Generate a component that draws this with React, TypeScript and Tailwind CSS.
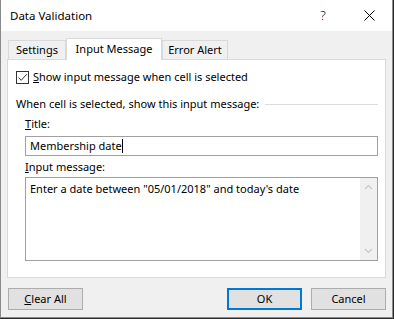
import React from 'react';

const font = { fontFamily: '"Noto Sans", "Liberation Sans", sans-serif' };

function Tab({ label, active, width }: { label: string; active?: boolean; width: string }) {
  return active ? (
    <div className={`relative z-10 -mb-px h-[22px] ${width} bg-white border border-b-0 border-[#d9d9d9] flex items-center justify-center text-[11px] text-black`}>
      {label}
    </div>
  ) : (
    <div className={`h-[19px] ${width} bg-[#f0f0f0] border border-b-0 border-[#d9d9d9] flex items-center justify-center text-[11px] text-black`}>
      {label}
    </div>
  );
}

function Button({ children, primary, className = '' }: { children: React.ReactNode; primary?: boolean; className?: string }) {
  return (
    <div
      className={`h-[22px] w-[75px] flex items-center justify-center text-[11px] text-black bg-[#e1e1e1] ${
        primary ? 'border-2 border-[#0078d7]' : 'border border-[#adadad]'
      } ${className}`}
    >
      {children}
    </div>
  );
}

export default function App() {
  return (
    <div className="w-[394px] h-[319px] bg-[#2b2b2b] overflow-hidden" style={font}>
      <div className="w-[393px] h-[318px] flex flex-col bg-[#f0f0f0] border-l border-r border-b border-[#8a8a8a]">
        {/* Title bar */}
        <div className="h-[31px] bg-white flex items-center shrink-0">
          <span className="pl-[9px] text-[11.5px] text-black flex-1">Data Validation</span>
          <span className="w-[46px] text-center text-[13px] font-light text-black">?</span>
          <span className="w-[46px] flex justify-center">
            <svg width="11" height="11" viewBox="0 0 11 11">
              <path d="M0.5 0.5 L10.5 10.5 M10.5 0.5 L0.5 10.5" stroke="#000" strokeWidth="1" />
            </svg>
          </span>
        </div>

        {/* Body */}
        <div className="flex-1 flex flex-col px-[6px] pt-[7px]">
          <div className="flex items-end pl-px">
            <Tab label="Settings" width="w-[58px]" />
            <Tab label="Input Message" width="w-[96px]" active />
            <Tab label="Error Alert" width="w-[66px]" />
          </div>

          <div className="h-[219px] w-[379px] bg-white border border-[#d9d9d9] flex flex-col pl-[8px] pr-[7px] text-[11px] text-black">
            <div className="flex items-center gap-[4px] mt-[10px] h-[14px]">
              <div className="w-[13px] h-[13px] border border-[#333] flex items-center justify-center">
                <svg width="11" height="11" viewBox="0 0 11 11">
                  <path d="M1.5 5.5 L4.2 8.3 L9.8 2.2" fill="none" stroke="#333" strokeWidth="1" />
                </svg>
              </div>
              <span>
                <u>S</u>how input message when cell is selected
              </span>
            </div>

            <div className="flex items-center gap-[6px] mt-[12px] h-[16px]">
              <span className="whitespace-nowrap">When cell is selected, show this input message:</span>
              <div className="flex-1 h-px bg-[#dcdcdc]" />
            </div>

            <div className="pl-[9px] flex flex-col">
              <span className="mt-[4px] h-[16px] leading-[16px]">
                <u>T</u>itle:
              </span>
              <div className="mt-[4px] h-[20px] border border-[#a0a0a0] flex items-center pl-[4px]">
                <span>Membership date</span>
                <span className="w-px h-[14px] bg-black" />
              </div>
              <span className="mt-[2px] h-[17px] leading-[17px]">
                <u>I</u>nput message:
              </span>
              <div className="mt-[2px] h-[84px] border border-[#a0a0a0] flex">
                <div className="flex-1 pl-[4px] pt-[3px] leading-[16px]">
                  Enter a date between "05/01/2018" and today's date
                </div>
                <div className="w-[17px] bg-[#f0f0f0] flex flex-col justify-between items-center py-[6px]">
                  <svg width="9" height="6" viewBox="0 0 9 6">
                    <path d="M1 5 L4.5 1.5 L8 5" fill="none" stroke="#c8c8c8" strokeWidth="1.2" />
                  </svg>
                  <svg width="9" height="6" viewBox="0 0 9 6">
                    <path d="M1 1 L4.5 4.5 L8 1" fill="none" stroke="#c8c8c8" strokeWidth="1.2" />
                  </svg>
                </div>
              </div>
            </div>
          </div>

          <div className="flex items-center mt-[10px] pl-px">
            <Button>
              <span>
                <u>C</u>lear All
              </span>
            </Button>
            <div className="flex-1" />
            <Button primary>OK</Button>
            <Button className="ml-[9px] mr-[0px]">Cancel</Button>
          </div>
        </div>
      </div>
    </div>
  );
}
